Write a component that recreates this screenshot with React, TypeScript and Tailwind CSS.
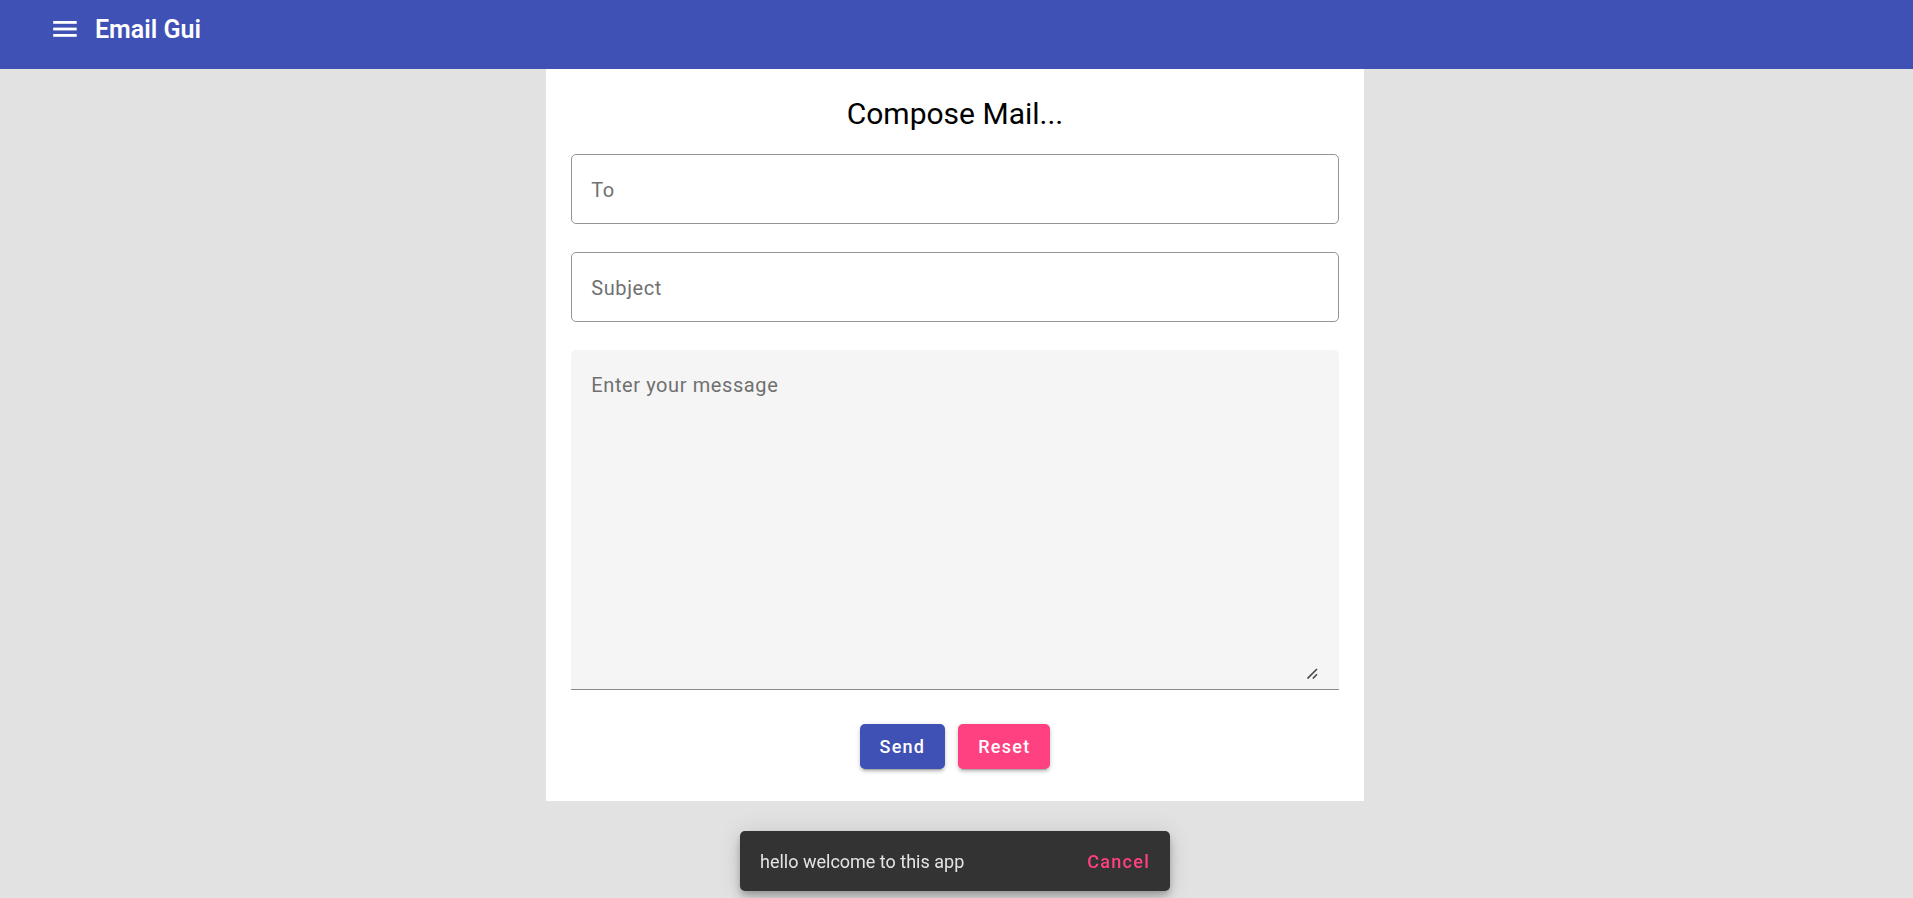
import { useState } from "react";

function MenuIcon() {
  return (
    <svg viewBox="0 0 30 30" className="size-[30px]" fill="currentColor" aria-hidden="true">
      <rect x="3.2" y="7" width="23.5" height="2.8" />
      <rect x="3.2" y="13.6" width="23.5" height="2.8" />
      <rect x="3.2" y="20" width="23.5" height="2.8" />
    </svg>
  );
}

function ResizeHandle() {
  return (
    <svg
      viewBox="0 0 12 12"
      className="pointer-events-none absolute right-5 bottom-[10px] size-3"
      stroke="#4a4a4a"
      strokeWidth="1.6"
      aria-hidden="true"
    >
      <path d="M0.5 11.5 10 2M5.8 11.5 10 7.3" />
    </svg>
  );
}

function Header() {
  return (
    <header className="flex h-[69px] items-start bg-[#3f51b5] px-[50px] text-white">
      <div className="flex h-[58px] items-center gap-[15px]">
        <button type="button" aria-label="Open menu">
          <MenuIcon />
        </button>
        <h1 className="pt-0.5 text-[25px] leading-8 font-semibold">Email Gui</h1>
      </div>
    </header>
  );
}

function TextField({ label, type }: { label: string; type: string }) {
  return (
    <input
      type={type}
      aria-label={label}
      placeholder={label}
      className="h-[70px] w-full rounded-[5px] border border-[#949494] bg-white px-[19px] pt-0.5 text-xl tracking-[0.03em] outline-none placeholder:text-[#707070] focus:border-[#3f51b5]"
    />
  );
}

function MessageField() {
  return (
    <div className="relative flex h-[340px] rounded-t-[5px] border-b border-[#8c8c8c] bg-[#f5f5f5] px-5 pt-5 pb-[10px]">
      <textarea
        aria-label="Enter your message"
        placeholder="Enter your message"
        className="w-full resize bg-transparent text-xl leading-[30px] tracking-[0.03em] outline-none placeholder:text-[#707070] [&::-webkit-resizer]:hidden"
      />
      <ResizeHandle />
    </div>
  );
}

const buttonBase =
  "h-[45px] rounded-[5px] px-5 text-lg font-medium tracking-[0.07em] text-white shadow-[0_4px_1px_-3px_rgba(0,0,0,0.2),0_3px_3px_0_rgba(0,0,0,0.14),0_1px_6px_0_rgba(0,0,0,0.12)]";

export default function App() {
  const [open, setOpen] = useState(true);
  return (
    <div className="min-h-screen bg-[#e2e2e2] font-[Roboto,sans-serif] text-black">
      <Header />
      <main className="pr-[3px]">
        <form className="mx-auto w-[42.8%] bg-white px-[25px] pt-[25px] pb-8">
          <h2 className="text-center text-[30px] leading-10">Compose Mail...</h2>
          <div className="mt-5 flex flex-col gap-7">
            <TextField label="To" type="email" />
            <TextField label="Subject" type="text" />
            <MessageField />
          </div>
          <div className="mt-[34px] flex justify-center gap-[13px]">
            <button type="submit" className={`${buttonBase} bg-[#3f51b5]`}>
              Send
            </button>
            <button type="reset" className={`${buttonBase} bg-[#ff4081]`}>
              Reset
            </button>
          </div>
        </form>
      </main>
      {open && (
        <div className="pointer-events-none fixed inset-x-0 bottom-[7px] flex justify-center pr-[3px]">
          <div
            role="status"
            className="pointer-events-auto flex h-[60px] min-w-[430px] items-center justify-between rounded-[5px] bg-[#333333] px-5 pt-0.5 text-lg shadow-[0_4px_6px_-1px_rgba(0,0,0,0.2),0_8px_13px_0_rgba(0,0,0,0.14),0_1px_23px_0_rgba(0,0,0,0.12)]"
          >
            <span className="text-[#e4e4e4]">hello welcome to this app</span>
            <button
              type="button"
              onClick={() => setOpen(false)}
              className="font-medium tracking-[0.07em] text-[#ff4081]"
            >
              Cancel
            </button>
          </div>
        </div>
      )}
    </div>
  );
}
